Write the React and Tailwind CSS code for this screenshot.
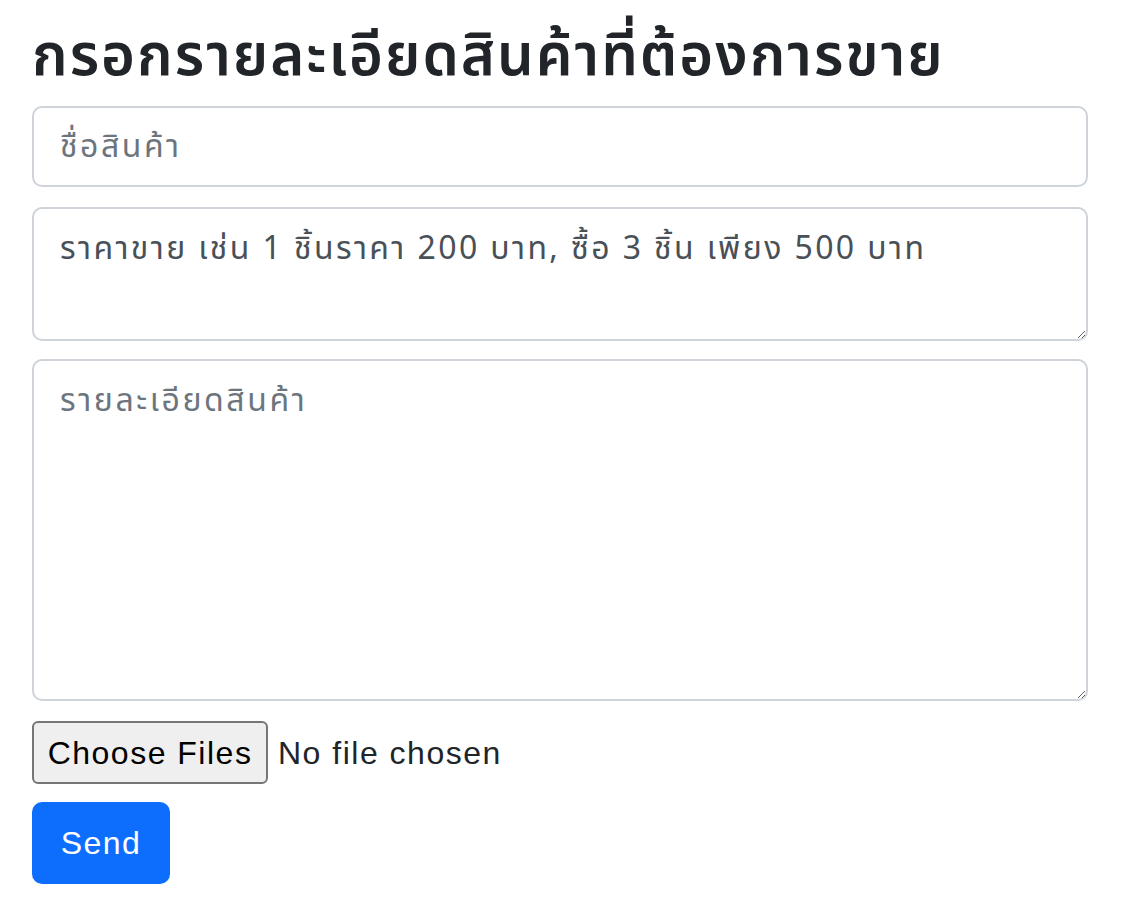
import React from "react";

const thai = "font-['Noto_Sans_Thai','Noto_Sans','Liberation_Sans',sans-serif]";
const latin = "font-['Liberation_Sans',sans-serif] tracking-[1.5px]";

const App = () => {
  return (
    <div className={`min-h-screen bg-white px-8 pt-[22px] ${thai}`}>
      <h1 className="text-[58px] leading-[70px] font-semibold tracking-[2px] text-[#212529] mb-[14px]">
        กรอกรายละเอียดสินค้าที่ต้องการขาย
      </h1>
      <form className="flex flex-col w-[1056px]">
        <input
          type="text"
          placeholder="ชื่อสินค้า"
          className="h-[81px] w-full rounded-[10px] border-2 border-[#ced4da] px-[26px] text-[32px] tracking-[2.5px] text-[#495057] placeholder:text-[#6c757d] outline-none"
        />
        <textarea
          rows={2}
          defaultValue="ราคาขาย เช่น 1 ชิ้นราคา 200 บาท, ซื้อ 3 ชิ้น เพียง 500 บาท"
          className="mt-[20px] h-[134px] w-full rounded-[10px] border-2 border-[#ced4da] px-[26px] pt-[16px] text-[32px] leading-[48px] tracking-[2.4px] text-[#495057] outline-none"
        />
        <textarea
          placeholder="รายละเอียดสินค้า"
          className="mt-[18px] h-[342px] w-full rounded-[10px] border-2 border-[#ced4da] px-[26px] pt-[16px] text-[32px] leading-[48px] tracking-[2.6px] text-[#495057] placeholder:text-[#6c757d] outline-none"
        />
        <div className={`mt-[20px] flex items-center gap-[10px] ${latin}`}>
          <button
            type="button"
            className="h-[63px] w-[236px] rounded-[6px] border-2 border-[#767676] bg-[#efefef] text-[32px] text-black"
          >
            Choose Files
          </button>
          <span className="text-[32px] text-[#212529]">No file chosen</span>
        </div>
        <button
          type="button"
          className={`mt-[18px] h-[82px] w-[138px] rounded-[10px] bg-[#0d6efd] text-[32px] text-white ${latin}`}
        >
          Send
        </button>
      </form>
    </div>
  );
};

export default App;
